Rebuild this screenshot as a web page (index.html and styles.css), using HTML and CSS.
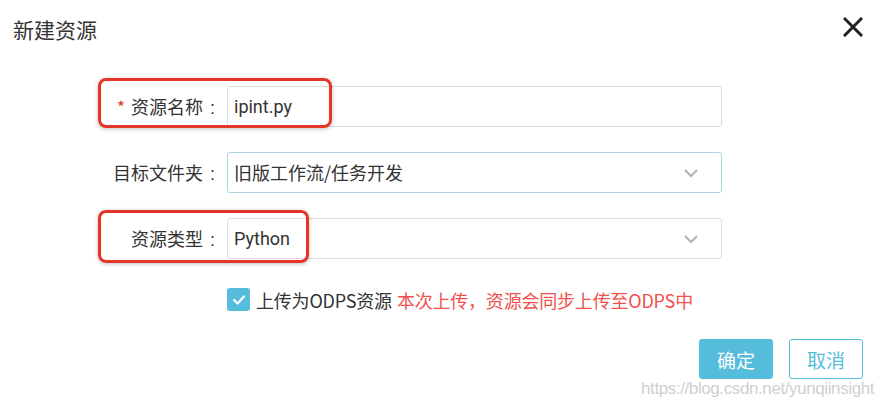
FILE: index.html
```html
<!DOCTYPE html>
<html lang="zh-CN">
<head>
<meta charset="utf-8">
<title>新建资源</title>
<link rel="stylesheet" href="styles.css">
</head>
<body>
<div class="dialog">
  <div class="header">
    <div class="title">新建资源</div>
    <svg class="close" width="20" height="20" viewBox="0 0 20 20"><path d="M2 2 L18 18 M18 2 L2 18" stroke="#222" stroke-width="3" stroke-linecap="square"/></svg>
  </div>
  <div class="form">
    <div class="label"><span class="req">*</span>资源名称<span class="colon">:</span></div>
    <div class="input">ipint.py</div>
    <div class="label">目标文件夹<span class="colon">:</span></div>
    <div class="input focus">旧版工作流/任务开发<svg class="chev" width="16" height="10" viewBox="0 0 16 10"><path d="M2 2 L8 8 L14 2" fill="none" stroke="#b3b3b3" stroke-width="2"/></svg></div>
    <div class="label">资源类型<span class="colon">:</span></div>
    <div class="input">Python<svg class="chev" width="16" height="10" viewBox="0 0 16 10"><path d="M2 2 L8 8 L14 2" fill="none" stroke="#b3b3b3" stroke-width="2"/></svg></div>
    <div></div>
    <div class="check-row">
      <span class="checkbox"><svg width="14" height="12" viewBox="0 0 14 12"><path d="M2 6 L5.5 9.5 L12 2.5" fill="none" stroke="#fff" stroke-width="2.2" stroke-linecap="round" stroke-linejoin="round"/></svg></span>
      <span class="check-text">上传为ODPS资源</span>
      <span class="hint">本次上传，资源会同步上传至ODPS中</span>
    </div>
  </div>
  <div class="footer">
    <button class="btn primary">确定</button>
    <button class="btn">取消</button>
  </div>
  <div class="mark mark1"></div>
  <div class="mark mark2"></div>
  <div class="watermark">https://blog.csdn.net/yunqiinsight</div>
</div>
</body>
</html>
```
FILE: styles.css
```css
* { box-sizing: border-box; }
html, body { margin: 0; padding: 0; background: #fff; }
body {
  font-family: "Noto Sans CJK SC", "Noto Sans", sans-serif;
  color: #333;
  width: 882px;
  height: 408px;
  overflow: hidden;
}
.dialog { position: relative; width: 882px; height: 408px; }
.header {
  display: flex;
  justify-content: space-between;
  align-items: center;
  padding: 9px 19px 0 13px;
  height: 48px;
}
.title { font-size: 21px; line-height: 30px; color: #333; }
.close { display: block; margin-top: -4px; }
.form {
  display: grid;
  grid-template-columns: 227px 495px;
  grid-auto-rows: 41px;
  row-gap: 25px;
  margin-top: 38px;
}
.label {
  font-size: 18px;
  text-align: right;
  padding-right: 12px;
  line-height: 41px;
  color: #333;
}
.req { color: #e5362b; margin-right: 6px; font-size: 17px; }
.colon { margin-left: 7px; font-family: "Liberation Sans", sans-serif; }
.input {
  border: 1px solid #dcdcdc;
  border-radius: 3px;
  font-size: 18px;
  line-height: 39px;
  padding: 0 8px 0 6px;
  display: flex;
  align-items: center;
  justify-content: space-between;
  color: #333;
  font-family: Roboto, "Noto Sans CJK SC", sans-serif;
}
.input.focus { border-color: #a9d3df; font-family: "Noto Sans CJK SC", sans-serif; }
.chev { margin-right: 14px; }
.check-row {
  display: flex;
  align-items: center;
  font-size: 18px;
  height: 41px;
  margin-top: -5px;
}
.checkbox {
  width: 23px; height: 23px;
  background: #55bddb;
  border-radius: 3px;
  display: flex; align-items: center; justify-content: center;
  margin-right: 6px;
}
.check-text { color: #333; letter-spacing: -0.2px; }
.hint { color: #f0514d; margin-left: 5px; letter-spacing: -0.2px; }
.footer {
  display: flex;
  justify-content: flex-end;
  gap: 16px;
  padding-right: 19px;
  margin-top: 14px;
}
.btn {
  width: 74px; height: 40px;
  border: 1px solid #55bddb;
  border-radius: 3px;
  background: #fff;
  color: #55bddb;
  font-size: 19px;
  font-family: "Noto Sans CJK SC", sans-serif;
  padding: 0;
}
.btn.primary { background: #55bddb; color: #fff; }
.mark {
  position: absolute;
  border: 3px solid #e43528;
  border-radius: 8px;
  box-shadow: 0 1px 4px rgba(0,0,0,0.25);
}
.mark1 { left: 98px; top: 78px; width: 234px; height: 50px; }
.mark2 { left: 98px; top: 210px; width: 211px; height: 53px; }
.watermark {
  position: absolute;
  left: 641px; top: 379px;
  font-family: "Liberation Sans", sans-serif;
  font-size: 17px;
  color: rgba(190,190,190,0.75);
  letter-spacing: -0.4px;
  white-space: nowrap;
  text-shadow: 0 0 1px #fff;
}
```
